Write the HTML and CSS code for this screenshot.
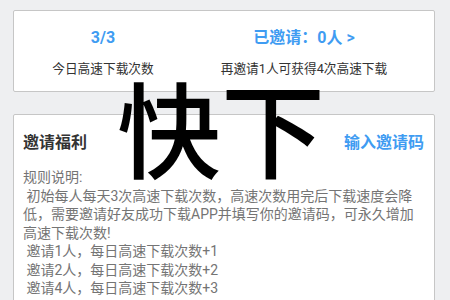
FILE: index.html
```html
<!DOCTYPE html>
<html>
<head>
    <meta charset="UTF-8"/>
    <title>邀请福利</title>
    <link rel="stylesheet" href="styles.css">
</head>
<body>
    <div class="card stats">
        <div class="stat stat-left">
            <div class="stat-value">3/3</div>
            <div class="stat-label">今日高速下载次数</div>
        </div>
        <div class="stat stat-right">
            <div class="stat-value">已邀请：0人 &gt;</div>
            <div class="stat-label">再邀请1人可获得4次高速下载</div>
        </div>
    </div>

    <div class="card rules">
        <div class="rules-head">
            <span class="rules-title">邀请福利</span>
            <span class="rules-link">输入邀请码</span>
        </div>
        <div class="rules-text">
            规则说明:<br>
            &nbsp;初始每人每天3次高速下载次数，高速次数用完后下载速度会降低，需要邀请好友成功下载APP并填写你的邀请码，可永久增加高速下载次数!<br>
            &nbsp;邀请1人，每日高速下载次数+1<br>
            &nbsp;邀请2人，每日高速下载次数+2<br>
            &nbsp;邀请4人，每日高速下载次数+3<br>
            &nbsp;邀请8人，每日高速下载次数+4
        </div>
    </div>

    <!-- 水印 -->
    <div class="watermark">快下</div>
</body>
</html>
```

FILE: styles.css
```css
body {
    margin: 0;
    padding: 10px 15px 0 13px;
    background-color: #eeeff1;
    font-family: Roboto, "Noto Sans CJK SC", sans-serif;
    overflow: hidden;
    height: 290px;
}
.card {
    background-color: #ffffff;
    border: 1px solid #c6c6c6;
    border-radius: 2px;
}
.stats {
    display: grid;
    grid-template-columns: 178px 224px;
    height: 80px;
}
.stat {
    text-align: center;
    padding-top: 17px;
}
.stat-value {
    color: #3f9cf2;
    font-size: 16px;
    font-weight: bold;
    line-height: 20px;
}
.stat-label {
    color: #333333;
    font-size: 12.7px;
    line-height: 16px;
    margin-top: 13px;
    white-space: nowrap;
}
.rules {
    margin-top: 22px;
    padding: 17px 10px 20px 9px;
}
.rules-head {
    display: flex;
    justify-content: space-between;
    align-items: center;
    line-height: 22px;
    font-size: 16px;
    font-weight: bold;
}
.rules-title {
    color: #333333;
}
.rules-link {
    color: #3f9cf2;
}
.rules-text {
    margin-top: 14px;
    color: #747474;
    font-size: 14px;
    line-height: 18.5px;
}
.watermark {
    position: absolute;
    left: 117px;
    top: 74px;
    font-family: "Noto Sans CJK SC", sans-serif;
    font-size: 104px;
    font-weight: 500;
    line-height: 1;
    color: #000000;
}
```
